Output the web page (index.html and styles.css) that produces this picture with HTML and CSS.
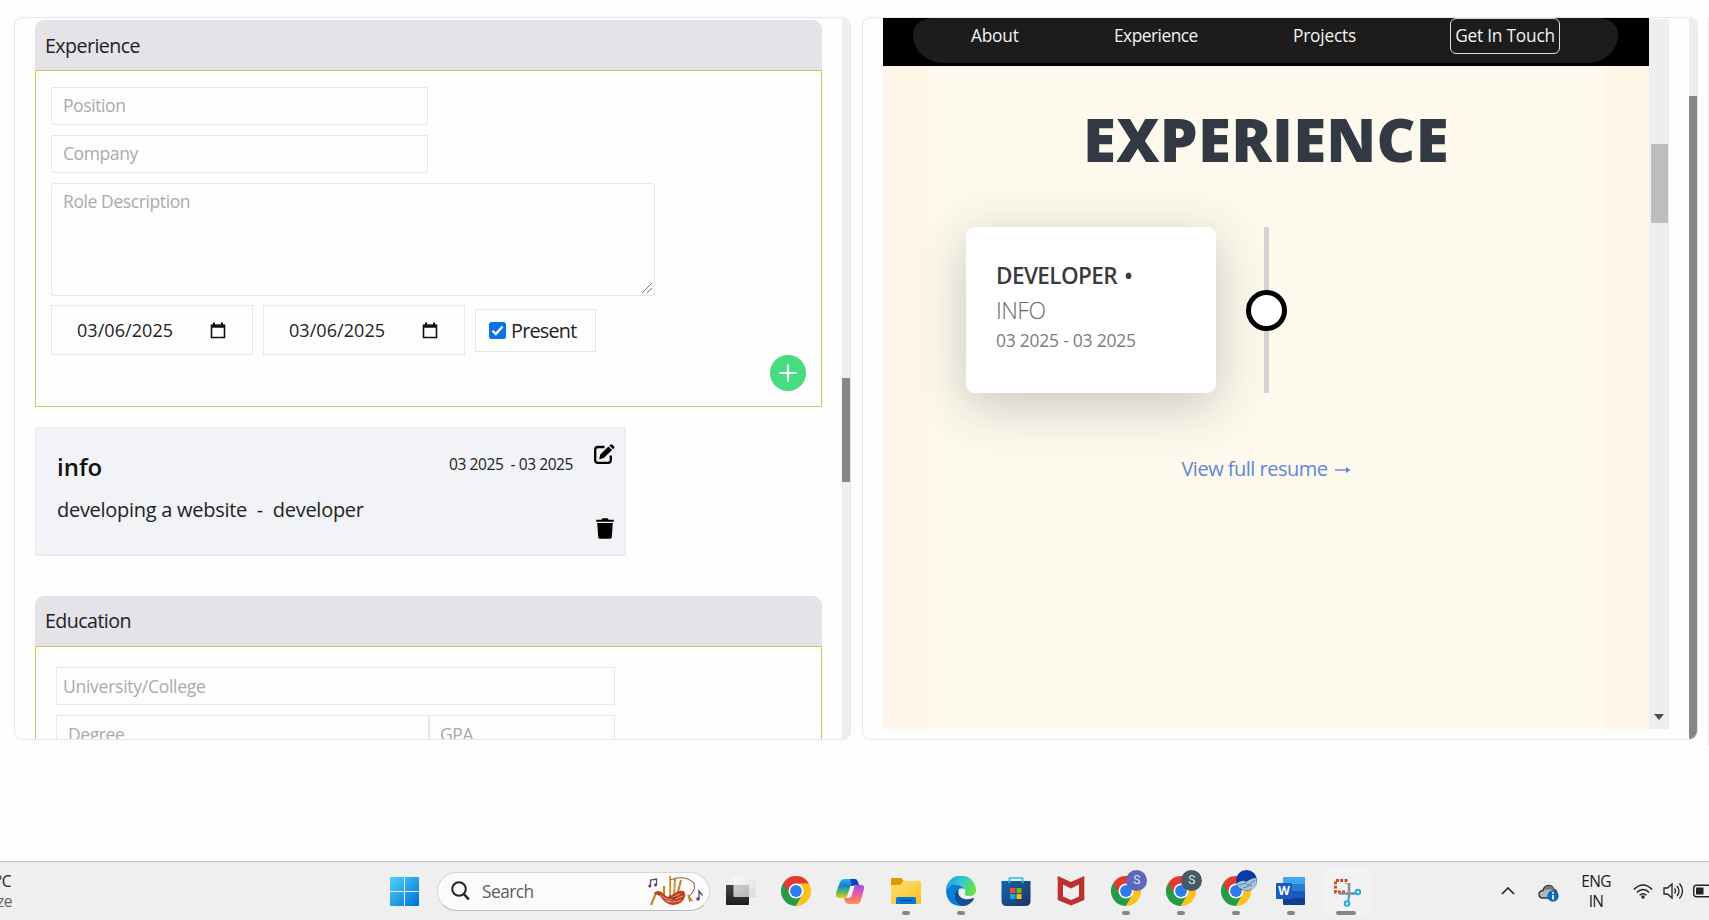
FILE: index.html
```html
<!DOCTYPE html>
<html lang="en">
<head>
<meta charset="utf-8">
<title>Portfolio builder</title>
<link rel="stylesheet" href="styles.css">
</head>
<body>
<svg class="defs" width="0" height="0">
  <defs>
    <linearGradient id="winA" x1="0" y1="0" x2="1" y2="1"><stop offset="0" stop-color="#4cd2ff"/><stop offset="1" stop-color="#0070d0"/></linearGradient>
    <linearGradient id="folder" x1="0" y1="0" x2="1" y2="1"><stop offset="0" stop-color="#ffdf70"/><stop offset="1" stop-color="#fcbf22"/></linearGradient>
    <linearGradient id="edgeTop" x1="0" y1="0" x2="1" y2=".4"><stop offset="0" stop-color="#1f8fd6"/><stop offset=".5" stop-color="#35c1dd"/><stop offset="1" stop-color="#62e04c"/></linearGradient>
    <linearGradient id="store" x1="0" y1="0" x2="1" y2="1"><stop offset="0" stop-color="#0d65b5"/><stop offset="1" stop-color="#20355c"/></linearGradient>
    <linearGradient id="copA" x1="0" y1="0" x2="0" y2="1"><stop offset="0" stop-color="#1fb6f0"/><stop offset=".35" stop-color="#1780d0"/><stop offset=".65" stop-color="#4fb46a"/><stop offset="1" stop-color="#f2c719"/></linearGradient>
    <linearGradient id="copB" x1="0" y1="0" x2="0" y2="1"><stop offset="0" stop-color="#a24be8"/><stop offset=".55" stop-color="#ef5f92"/><stop offset="1" stop-color="#ff9455"/></linearGradient>
    <linearGradient id="dark" x1="0" y1="0" x2="0" y2="1"><stop offset="0" stop-color="#444"/><stop offset="1" stop-color="#1c1c1c"/></linearGradient>
    <linearGradient id="glass" x1="0" y1="0" x2="1" y2="1"><stop offset="0" stop-color="#fff"/><stop offset="1" stop-color="#d4d4d4"/></linearGradient>
    <symbol id="chrome" viewBox="0 0 30 30">
      <path d="M15 15 2 7.500A15 15 0 0 1 28 7.500Z" fill="#e33b2e"/>
      <path d="M15 15 2 7.500A15 15 0 0 0 15 30L21.500 18.700Z" fill="#259b48"/>
      <path d="M15 7.500H28A15 15 0 0 1 15 30L21.500 18.700Z" fill="#fcc21b"/>
      <path d="M2 7.500 8.500 18.700 15 15V7.500Z" fill="#e33b2e"/>
      <path d="M2 7.500 8.500 18.700 10 21.500 5 22Z" fill="#259b48"/>
      <circle cx="15" cy="15" r="7.500" fill="#fff"/><circle cx="15" cy="15" r="5.900" fill="#2f7bee"/>
    </symbol>
    <symbol id="calendar" viewBox="0 0 16 17">
      <path d="M1.500 3.500h13v12h-13z" fill="none" stroke="#111" stroke-width="1.600"/><path d="M1 2.500h14v3.200H1zM3 .5h2v3H3zM11 .5h2v3h-2z" fill="#111"/>
    </symbol>
  </defs>
</svg>

<main class="workspace">
  <section class="panel editor">
    <div class="editor-body">
      <h2 class="section-title">Experience</h2>
      <div class="section-box experience-box">
        <div class="field short">Position</div>
        <div class="field short">Company</div>
        <div class="field area">Role Description
          <svg class="grip" width="12" height="12" viewBox="0 0 12 12"><path d="M1 11 11 1M6 11l5-5" stroke="#777" fill="none"/></svg>
        </div>
        <div class="dates">
          <div class="date"><span>03/06/2025</span><svg width="16" height="17"><use href="#calendar"/></svg></div>
          <div class="date"><span>03/06/2025</span><svg width="16" height="17"><use href="#calendar"/></svg></div>
          <div class="present">
            <svg width="17" height="17" viewBox="0 0 17 17"><rect width="17" height="17" rx="2.500" fill="#0b72ea"/><path d="m3.500 8.800 3.300 3.300 6.700-7.600" fill="none" stroke="#fff" stroke-width="2.300"/></svg>
            <span>Present</span>
          </div>
        </div>
        <div class="add-row"><span class="add"><svg width="36" height="36" viewBox="0 0 36 36"><path d="M18 9.500v17M9.500 18h17" stroke="#fff" stroke-width="2.200"/></svg></span></div>
      </div>

      <article class="entry">
        <div class="entry-text">
          <h3>info</h3>
          <p>developing a website&nbsp; -&nbsp; developer</p>
        </div>
        <span class="entry-date">03 2025&nbsp; - 03 2025</span>
        <div class="entry-actions">
          <svg width="21" height="20" viewBox="0 0 21 20"><path d="M10.500 3H4Q1.200 3 1.200 5.800V16Q1.200 18.800 4 18.800H14Q16.800 18.800 16.800 16V11.500" fill="none" stroke="#000" stroke-width="2.300"/><path d="m6.200 10.500 8.300-8 3.600 3.600-8.300 8-4.600 1.100ZM15.400 1.600 16.400.7q1-.8 2 0l1.600 1.600q.8 1 0 2l-1 1Z" fill="#000"/></svg>
          <svg class="trash" width="18" height="21" viewBox="0 0 18 21"><path d="M.3 1.800h5L6.500.3h5l1.200 1.500h5v2H.3ZM1.200 5h15.600l-1 14q-.2 1.700-1.800 1.700H4q-1.600 0-1.800-1.700Z" fill="#000"/></svg>
        </div>
      </article>

      <h2 class="section-title">Education</h2>
      <div class="section-box education-box">
        <div class="field school">University/College</div>
        <div class="pair"><div class="field degree">Degree</div><div class="field gpa">GPA</div></div>
      </div>
    </div>
    <div class="rail editor-rail"><i></i></div>
  </section>

  <section class="panel preview">
    <div class="site">
      <nav class="nav"><div class="pill">
        <span class="n-about">About</span><span class="n-exp">Experience</span><span class="n-proj">Projects</span><span class="n-touch">Get In Touch</span>
      </div></nav>
      <div class="page">
        <h1>EXPERIENCE</h1>
        <div class="timeline">
          <div class="job">
            <b>DEVELOPER •</b>
            <em>INFO</em>
            <small>03 2025 - 03 2025</small>
          </div>
          <div class="axis"><i></i></div>
        </div>
        <a class="resume">View full resume <svg width="16" height="10" viewBox="0 0 16 10"><path d="M0 5h14" fill="none" stroke="#5f86d8" stroke-width="1.400"/><path d="m11 2 4.500 3L11 8Z" fill="#5f86d8"/></svg></a>
      </div>
    </div>
    <div class="site-rail"><i></i><svg width="10" height="6" viewBox="0 0 10 6"><path d="M0 0h10L5 6Z" fill="#4a4a4a"/></svg></div>
    <div class="rail preview-rail"><i></i></div>
  </section>
  <div class="edge-line"></div>
</main>

<footer class="taskbar">
  <div class="weather"><span>°C</span><span class="dim">ze</span></div>
  <svg class="start" width="29" height="29" viewBox="0 0 29 29"><path d="M1 0h13v14H0V1q0-1 1-1ZM15 0h13q1 0 1 1v13H15ZM0 15h14v14H1q-1 0-1-1ZM15 15h14v13q0 1-1 1H15Z" fill="url(#winA)"/></svg>
  <div class="search">
    <svg width="19" height="20" viewBox="0 0 19 20"><circle cx="8" cy="8" r="6.800" fill="none" stroke="#222" stroke-width="2"/><path d="m12.800 13 5 5.500" stroke="#222" stroke-width="2.600"/></svg>
    <span>Search</span>
    <svg class="pipes" width="56" height="32" viewBox="0 0 56 32">
      <path d="M2.500 11V5l6-1v6" fill="none" stroke="#5f4264" stroke-width="1.300"/><circle cx="1.800" cy="11" r="1.500" fill="#5f4264"/><circle cx="7.500" cy="10" r="1.500" fill="#5f4264"/>
      <path d="M51 24v-8l3.500 4.500" fill="none" stroke="#5f4264" stroke-width="1.300"/><circle cx="50" cy="24" r="1.800" fill="#5f4264"/>
      <path d="M22 5q15-6 24 3 2 6-2 10-5 4-2 9" fill="none" stroke="#a24938" stroke-width="1"/>
      <path d="M22 1v21M16 11v10M27 4l-1 16M33 5l-4 16M8 18 3 30M40 20l4 6" stroke="#bf8522" stroke-width="2"/><path d="M21.500 1v19M27 6l-1 13" stroke="#f2c14f" stroke-width=".7"/>
      <path d="M5.500 19q3-5 8-2 3 3 6 5 5-2 9-5 4-2 7-1 3 3 1 7-3 7-12 7-7-1-11-7-3-4-8-4Z" fill="#bd4125"/><path d="M12 20q9 8 23 1M17 25q8 4 16 0M19 28q4-6 13-9" fill="none" stroke="#ffad83" stroke-width=".8"/><path d="M16 21q8 4 13 0l-2 3q-6 1-11-3Z" fill="#71351f"/>
    </svg>
  </div>
  <div class="apps">
    <div class="app"><svg width="30" height="30" viewBox="0 0 30 30"><path d="M0 9h23v19q0 1-1 1H1q-1 0-1-1Z" fill="url(#dark)"/><rect x="7.500" y="1" width="22" height="20" rx="1" fill="url(#glass)" fill-opacity=".78"/></svg></div>
    <div class="app"><svg width="30" height="30"><use href="#chrome"/></svg></div>
    <div class="app copilot"><svg width="30" height="30" viewBox="0 0 30 30"><path d="M9 3h10q2 0 3 3l1 3h-4q-2 0-3 2l-3 8q-1 3-4 3H3q-4 0-3-5L4 6Q5 3 9 3Z" fill="url(#copA)"/><path d="M14 3h5q2 0 3 3l1 3h-4q-2 0-3 2Z" fill="#173fba"/><path d="M21 28H12q-2 0-3-3l-1-3h2q3 0 4-3l3-8q1-2 3-2h5q4 0 3 4l-3 11q-1 4-4 4Z" fill="url(#copB)"/><path d="m14.500 10-4 12h2q2 0 3-2l3-10Z" fill="#f7f4f8"/></svg></div>
    <div class="app on"><svg width="30" height="30" viewBox="0 0 30 30"><path d="M0 3q0-1 1-1h9l3 3h-1v6H0Z" fill="#dc9a07"/><path d="M0 9h9l4-4h16q1 0 1 1v21q0 1-1 1H1q-1 0-1-1Z" fill="url(#folder)"/><path d="M5 28v-5q0-2 2-2h16q2 0 2 2v5Z" fill="#0b76cf"/><path d="M9 24.500h12" stroke="#064b94"/></svg></div>
    <div class="app on"><svg width="30" height="30" viewBox="0 0 30 30"><path d="M0 15A15 15 0 0 1 30 14Q30 20 23 20q-5 0-4-3 1-2-1-5Q14 7 7 9 2 10 0 15Z" fill="url(#edgeTop)"/><path d="M0 15Q2 9 9 8.500q7 0 9.500 4.500-5-2-7 2-1 3 0 6 2 7 8 7.500Q17 30 14 30 1 29 0 15Z" fill="#087fd7"/><path d="M9 17q0 8 10 8 5 0 8.500-3Q24 29 16 30 8 27 9 17Z" fill="#134f94"/><path d="M12.500 13.500Q9 14.500 9 19q1 7 8.500 11 7-1 10.500-7 0-1.500-1.500-.8-4 1.800-8 .8Q11 21 12.500 13.500Z" fill="#134f94"/></svg></div>
    <div class="app"><svg width="30" height="30" viewBox="0 0 30 30"><path d="M.5 5h29v20q0 5-5 5h-19q-5 0-5-5Z" fill="url(#store)"/><path d="M8.500 7V2h13v5" fill="none" stroke="#35bdf0" stroke-width="1.700"/><path d="M9 12h5.500v5H9Z" fill="#f25022"/><path d="M15.500 12h5v5h-5Z" fill="#7fba00"/><path d="M9 18h5.500v5H9Z" fill="#11a6ee"/><path d="M15.500 18h5v5h-5Z" fill="#ffb900"/></svg></div>
    <div class="app"><svg width="28" height="30" viewBox="0 0 28 30"><path fill-rule="evenodd" d="m.7 0 13.300 6L27.300 0v24L14 29.500.7 24ZM6 8.500v12l8 3.500 8-3.500v-12l-8 4Z" fill="#bf2f2f"/></svg></div>
    <div class="app on"><svg width="30" height="30"><use href="#chrome"/></svg><span class="avatar violet">S</span></div>
    <div class="app on"><svg width="30" height="30"><use href="#chrome"/></svg><span class="avatar slate">S</span></div>
    <div class="app on"><svg width="30" height="30"><use href="#chrome"/></svg><span class="avatar sky"><svg width="21" height="21" viewBox="0 0 21 21"><path d="M1 13q7-4 9-1 6-4 10-4l1 6-4 5-8 2-7-4Z" fill="#a9c3d5"/><path d="m3 15 6-2 3 2 7-5M7 18l9-3" stroke="#5687ac" fill="none"/></svg></span></div>
    <div class="app on"><svg width="30" height="30" viewBox="0 0 30 30"><path d="M7 2q0-1 1-1h20q1 0 1 1v6H7Z" fill="#41a5ee"/><path d="M7 8h22v7H7Z" fill="#2b7cd3"/><path d="M7 15h22v7H7Z" fill="#185abd"/><path d="M7 22h22v6q0 1-1 1H8q-1 0-1-1Z" fill="#103f91"/><rect y="7" width="16" height="16" rx="1" fill="#185abd"/><text x="8" y="19" text-anchor="middle" class="word">W</text></svg></div>
    <div class="app on active"><svg width="30" height="32" viewBox="0 0 30 32"><path d="M4.500 5H15v13H4.500Z" fill="#f5f5f5"/><path d="M14 17H4.500V5.500H15V9" fill="none" stroke="#cf4015" stroke-width="2.800" stroke-dasharray="2.800 1.500"/><path d="M18 8v14M8 18.500h15" stroke="#8d8d8d" stroke-width="2.600"/><circle cx="27" cy="17" r="2.300" fill="none" stroke="#29a7df" stroke-width="1.900"/><circle cx="16" cy="28.500" r="2.300" fill="none" stroke="#29a7df" stroke-width="1.900"/><path d="m21 19 4-1.200M18 21.500l-1 5" stroke="#29a7df" stroke-width="2"/></svg></div>
  </div>
  <div class="tray">
    <svg class="chev" width="14" height="8" viewBox="0 0 14 8"><path d="m1 7 6-6 6 6" fill="none" stroke="#222" stroke-width="1.600"/></svg>
    <svg class="cloud" width="21" height="18" viewBox="0 0 21 18"><path d="M5 14Q1 14 1 10.500 1 7 5 6.500 6 2 10.500 1.500q4 0 5.500 4 3 1 3 4.500-1 4-5 4Z" fill="#b5b5b5" stroke="#333" stroke-width="1.400"/><path d="M6 6q5-1 10 0l-1-3-4-1.500Q7 2 6 6Z" fill="#777"/><circle cx="15" cy="12" r="5.700" fill="#0968c3"/><path d="M15 11v4.500M15 8v1.700" stroke="#fff" stroke-width="1.700"/></svg>
    <div class="lang"><span>ENG</span><span>IN</span></div>
    <svg class="wifi" width="20" height="15" viewBox="0 0 20 15"><path d="M.8 5.500q9.200-9 18.400 0M3.800 8.500q6.200-6 12.400 0M6.600 11.300q3.400-3.300 6.800 0" fill="none" stroke="#222" stroke-width="1.400"/><circle cx="10" cy="13" r="1.700" fill="#222"/></svg>
    <svg class="speaker" width="21" height="18" viewBox="0 0 21 18"><path d="M1 6h3.500L9 2v14l-4.500-4H1Z" fill="none" stroke="#222" stroke-width="1.300"/><path d="M11.500 6.500q2 2.500 0 5M14 4q4 5 0 10M16.500 1.500q6 7.500 0 15" fill="none" stroke="#222" stroke-width="1.300"/></svg>
    <svg class="battery" width="16" height="14" viewBox="0 0 16 14"><rect x=".7" y="1.200" width="20" height="11.500" rx="2.500" fill="none" stroke="#222" stroke-width="1.400"/><path d="M3 3.500h7.500v7H3Z" fill="#222"/></svg>
  </div>
</footer>
</body>
</html>
```
FILE: styles.css
```css
* { box-sizing: border-box; }
body { margin: 0; width: 1709px; height: 920px; overflow: hidden; background: #fdfdfd; font-family: "Open Sans", "Noto Sans", sans-serif; letter-spacing: -0.032em; color: #222; display: flex; flex-direction: column; }
h1, h2, h3, p { margin: 0; font-weight: 400; }
svg { display: block; flex: none; }
.defs { position: absolute; }

.workspace { height: 861px; padding: 17px 0 0 14px; display: flex; align-items: flex-start; background: #fdfdfd; }
.panel { height: 723px; border: 1px solid #e6e6ec; border-radius: 9px; overflow: hidden; display: flex; background: #fdfdfd; flex: none; }
.editor { width: 837px; margin-right: 11px; }
.editor-body { width: 807px; padding: 2px 0 0 20px; flex: none; }
.section-title { height: 50px; line-height: 50px; font-size: 19.600px; padding-left: 10px; background: #e4e4e8; border-radius: 9px 9px 0 0; letter-spacing: -0.028em; }
.editor-body > .section-title:first-child { line-height: 51px; }
.section-box { border: 1.500px solid #d3c45c; }
.experience-box { height: 337px; padding: 16px 15px 0; display: flex; flex-direction: column; align-items: flex-start; gap: 10px; }
.field { border: 1px solid #e7e7ea; border-radius: 1px; color: #aaa9b2; font-size: 17.500px; letter-spacing: -0.023em; line-height: 34px; height: 38px; padding-left: 11px; }
.short { width: 377px; }
.area { width: 604px; height: 113px; display: flex; justify-content: space-between; border-radius: 3px; }
.grip { align-self: flex-end; margin: 0 1px 1px 0; }
.dates { display: flex; gap: 10px; align-items: center; margin-top: -1px; }
.date { width: 202px; height: 50px; border: 1px solid #e7e7ea; display: flex; align-items: center; justify-content: space-between; padding: 0 26px 0 25px; font-size: 18px; letter-spacing: 0.003em; }
.present { width: 121px; height: 43px; border: 1px solid #e7e7ea; display: flex; align-items: center; gap: 5px; padding-left: 13px; font-size: 19.800px; letter-spacing: -0.038em; }
.add-row { align-self: stretch; display: flex; justify-content: flex-end; margin-top: -10px; }
.add { width: 36px; height: 36px; border-radius: 50%; background: #47dc80; }
.entry { width: 591px; height: 129px; margin: 20px 0 40px; background: #f2f3f6; border: 1px solid #ececef; border-width: 1px 2px 2px 1px; display: flex; padding: 0 10px 0 21px; }
.entry-text { flex: 1; padding-top: 21px; }
.entry h3 { font-size: 24px; line-height: 36px; font-weight: 600; color: #111; letter-spacing: 0; }
.entry p { font-size: 20px; line-height: 28px; margin-top: 11px; letter-spacing: -0.014em; }
.entry-date { font-size: 15.500px; line-height: 24px; padding-top: 24px; margin-right: 21px; letter-spacing: -0.027em; }
.entry-actions { width: 21px; padding-top: 16px; display: flex; flex-direction: column; gap: 54px; margin-right: -1px; }
.trash { margin-left: 2px; }
.education-box { height: 160px; padding: 20px; display: flex; flex-direction: column; gap: 10px; }
.education-box .field { line-height: 36px; }
.school { width: 559px; padding-left: 6px; letter-spacing: -0.015em; }
.pair { display: flex; }
.degree { width: 373px; padding-left: 11px; }
.gpa { width: 186px; padding-left: 10px; }
.rail { width: 8px; height: 100%; background: #eeeeef; flex: none; }
.rail i { display: block; background: #868686; }
.editor-rail { margin-left: 20px; }
.editor-rail i { margin-top: 360px; height: 104px; }

.preview { width: 836px; }
.site { width: 766px; height: 711px; margin: 0 0 0 20px; background: linear-gradient(90deg, #fff5e8 44px, #fdf9ed 46px 721px, #fff5e8 723px); overflow: hidden; flex: none; }
.nav { height: 48px; background: #000; padding-left: 30px; }
.pill { width: 705px; height: 45px; background: #1c1c1c; border-radius: 20px 20px 30px 30px / 16px 16px 28px 28px; display: flex; color: #f3f3f3; font-size: 17.300px; letter-spacing: -0.012em; line-height: 35px; padding-left: 58px; white-space: nowrap; }
.n-about { width: 143px; }
.n-exp { width: 179px; letter-spacing: -0.028em; }
.n-proj { width: 157px; }
.n-touch { width: 110px; height: 36px; border: 1.500px solid #ddd; border-top-width: 1px; border-radius: 6px; text-align: center; line-height: 33px; }
.page { display: flex; flex-direction: column; align-items: center; }
.page h1 { font-size: 60px; line-height: 80px; font-weight: 800; color: #323943; margin-top: 33px; letter-spacing: 0.004em; }
.timeline { align-self: stretch; display: flex; margin-top: 48px; padding-left: 83px; }
.job { width: 250px; height: 166px; background: #fff; border-radius: 9px; box-shadow: 0 12px 52px rgba(50, 45, 45, .25); padding: 31px 30px; display: flex; flex-direction: column; }
.job b { font-size: 22.500px; line-height: 36px; font-weight: 600; color: #3a3b3e; letter-spacing: -0.026em; word-spacing: 2px; }
.job em { font-style: normal; font-weight: 300; font-size: 23px; line-height: 32px; color: #666; }
.job small { font-size: 17.500px; line-height: 28px; color: #7c7c80; letter-spacing: -0.014em; }
.axis { margin-left: 48px; width: 5px; background: #d2d2d6; display: flex; align-items: center; justify-content: center; }
.axis i { width: 41px; height: 41px; border: 5px solid #000; border-radius: 50%; background: #fff; flex: none; }
.resume { font-size: 20px; line-height: 30px; margin-top: 61px; color: #5f86d8; display: flex; align-items: center; gap: 7px; letter-spacing: -0.025em; }
.resume svg { margin-top: 2px; }
.site-rail { width: 20px; height: 710px; margin-top: 1px; background: #eee; flex: none; display: flex; flex-direction: column; align-items: center; }
.site-rail i { width: 17px; height: 79px; margin-top: 125px; background: #bdbdbd; }
.site-rail svg { margin-top: 491px; }
.preview-rail { margin-left: 20px; }
.preview-rail i { margin-top: 78px; height: 643px; }
.edge-line { width: 1px; height: 728px; background: #ececec; margin-left: 10px; }

.taskbar { height: 59px; background: #efefef; border-top: 1px solid #bdbfbf; display: flex; align-items: center; }
.weather { width: 12px; height: 58px; display: flex; flex-direction: column; align-items: flex-end; padding: 9px 0 0; font-size: 15.500px; line-height: 20px; flex: none; }
.weather span:first-child { margin-right: 1px; }
.dim { color: #666; }
.start { margin-left: 378px; }
.search { margin-left: 18px; width: 273px; height: 39px; border: 1px solid #d6d6d6; border-bottom-color: #bbb; border-radius: 20px; background: #fbfbfb; display: flex; align-items: center; padding-left: 13px; font-size: 17.300px; color: #5c5c5c; flex: none; }
.search span { width: 166px; margin-left: 12px; }
.apps { display: flex; margin-left: 3px; }
.app { width: 55px; height: 58px; display: flex; align-items: center; justify-content: center; position: relative; }
.app.copilot { padding-left: 1px; }
.app.on::after { content: ""; position: absolute; left: 24px; bottom: 5px; width: 8px; height: 4px; border-radius: 2px; background: #868686; }
.app.active::before { content: ""; position: absolute; inset: 5px 3px 5px 4px; border-radius: 5px; background: #f2f2f2; }
.app.active svg { position: relative; }
.app.active::after { left: 18px; width: 20px; }
.avatar { position: absolute; left: 28px; top: 8px; width: 21px; height: 21px; border-radius: 50%; overflow: hidden; color: #dfe2f2; font: 12px/21px Roboto, sans-serif; text-align: center; }
.violet { background: #5c68bd; }
.slate { background: #455a64; }
.sky { background: #0a3ba5; }
.word { font: bold 12px "Open Sans", sans-serif; fill: #fff; letter-spacing: 0; }
.tray { display: flex; align-items: center; margin-left: auto; }
.cloud { margin-left: 23px; margin-top: 3px; }
.lang { width: 34px; margin: 0 20px; display: flex; flex-direction: column; align-items: center; font-size: 15.500px; line-height: 20px; letter-spacing: -0.045em; }
.speaker { margin-left: 10px; }
.battery { margin-left: 9px; }
```
